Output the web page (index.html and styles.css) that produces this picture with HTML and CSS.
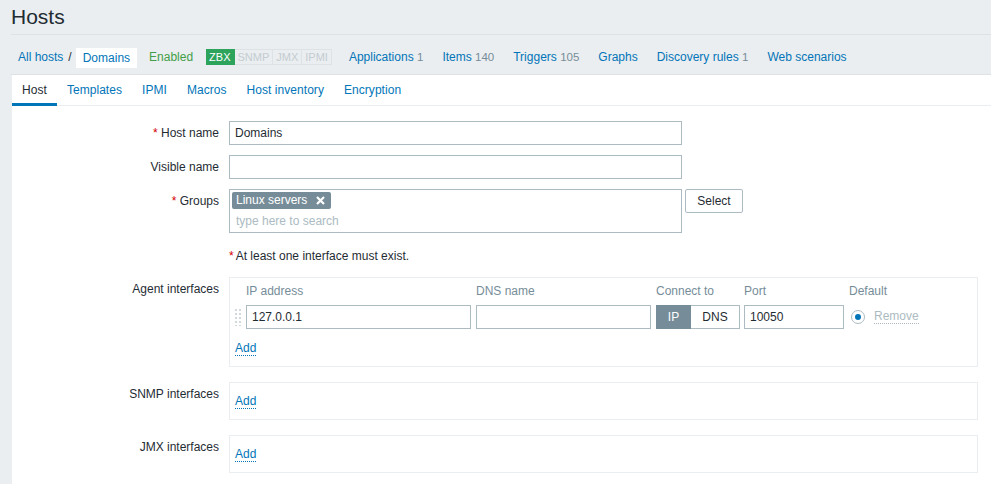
FILE: index.html
```html
<!DOCTYPE html>
<html>
<head>
<meta charset="utf-8">
<link rel="stylesheet" href="styles.css">
</head>
<body>
<header class="page-header"><h1>Hosts</h1></header>
<nav class="host-nav">
  <a class="nav-link" href="#">All hosts</a>
  <span class="sep">/</span>
  <span class="crumb-current">Domains</span>
  <span class="status-enabled">Enabled</span>
  <span class="avail">
    <span class="avail-item on">ZBX</span><span class="avail-item">SNMP</span><span class="avail-item">JMX</span><span class="avail-item">IPMI</span>
  </span>
  <a class="nav-link item first" href="#">Applications <span class="count">1</span></a>
  <a class="nav-link item" href="#">Items <span class="count">140</span></a>
  <a class="nav-link item" href="#">Triggers <span class="count">105</span></a>
  <a class="nav-link item" href="#">Graphs</a>
  <a class="nav-link item" href="#">Discovery rules <span class="count">1</span></a>
  <a class="nav-link item" href="#">Web scenarios</a>
</nav>
<main class="content">
  <div class="tabs">
    <span class="tab active">Host</span>
    <span class="tab">Templates</span>
    <span class="tab">IPMI</span>
    <span class="tab">Macros</span>
    <span class="tab">Host inventory</span>
    <span class="tab">Encryption</span>
  </div>
  <div class="form">
    <div class="row">
      <label class="label"><span class="req">*</span> Host name</label>
      <div class="field"><input class="text" value="Domains"></div>
    </div>
    <div class="row">
      <label class="label">Visible name</label>
      <div class="field"><input class="text" value=""></div>
    </div>
    <div class="row">
      <label class="label"><span class="req">*</span> Groups</label>
      <div class="field field-inline">
        <div class="multiselect">
          <span class="tag">Linux servers
            <svg class="tag-x" width="9" height="9" viewBox="0 0 9 9"><path d="M1 1L8 8M8 1L1 8" stroke="#fff" stroke-width="2.2" stroke-linecap="butt"/></svg>
          </span>
          <span class="placeholder">type here to search</span>
        </div>
        <button class="btn">Select</button>
      </div>
    </div>
    <div class="row">
      <div class="label"></div>
      <div class="field note"><span class="req">*</span> At least one interface must exist.</div>
    </div>
    <div class="row row-iface">
      <label class="label">Agent interfaces</label>
      <div class="iface-box agent">
        <div class="iface-head">
          <span class="c-handle"></span>
          <span class="c-ip">IP address</span>
          <span class="c-dns">DNS name</span>
          <span class="c-conn">Connect to</span>
          <span class="c-port">Port</span>
          <span class="c-def">Default</span>
        </div>
        <div class="iface-row">
          <span class="c-handle"><span class="handle"></span></span>
          <input class="text c-ip" value="127.0.0.1">
          <input class="text c-dns" value="">
          <span class="c-conn toggle"><span class="tg on">IP</span><span class="tg">DNS</span></span>
          <input class="text c-port" value="10050">
          <span class="c-def"><span class="radio"></span><span class="remove">Remove</span></span>
        </div>
        <a class="add" href="#">Add</a>
      </div>
    </div>
    <div class="row row-iface">
      <label class="label">SNMP interfaces</label>
      <div class="iface-box empty"><a class="add" href="#">Add</a></div>
    </div>
    <div class="row row-iface">
      <label class="label">JMX interfaces</label>
      <div class="iface-box empty"><a class="add" href="#">Add</a></div>
    </div>
  </div>
</main>
</body>
</html>
```
FILE: styles.css
```css
* { box-sizing: border-box; }
html, body { margin: 0; padding: 0; }
body {
  background: #ebeef0;
  font-family: "Liberation Sans", Arial, sans-serif;
  font-size: 12px;
  color: #1f2c33;
  overflow: hidden;
}
a { text-decoration: none; }

.page-header {
  margin-left: 11px;
  height: 35px;
  border-bottom: 1px solid #dde2e5;
}
.page-header h1 {
  margin: 0;
  padding-top: 5px;
  font-size: 21px;
  font-weight: normal;
  line-height: 24px;
  color: #1f2c33;
}

.host-nav {
  display: flex;
  align-items: center;
  margin-left: 11px;
  height: 40px;
  padding: 5px 0 0 7px;
  border-bottom: 1px solid #dde2e5;
  white-space: nowrap;
}
.nav-link { color: #0275b8; }
.sep { margin: 0 4px 0 5px; color: #1f2c33; }
.crumb-current {
  background: #fff;
  height: 20px;
  line-height: 20px;
  padding: 0 7px;
  color: #0275b8;
  margin-top: 1px;
}
.status-enabled { color: #429e47; margin-left: 12px; }
.avail {
  display: flex;
  margin-left: 13px;
  height: 16px;
}
.avail-item {
  display: inline-block;
  height: 16px;
  line-height: 14px;
  padding: 0 3px;
  font-size: 11px;
  color: #c3ccd1;
  border: 1px solid #dde2e5;
  border-left: none;
}
.avail-item.on {
  background: #2da35b;
  border-color: #2da35b;
  color: #fff;
}
.item { margin-left: 19px; }
.item.first { margin-left: 17px; }
.count { color: #768d99; font-size: 11.5px; }

.content {
  margin-left: 12px;
  background: #fff;
  height: 420px;
}
.tabs {
  display: flex;
  height: 31px;
  border-bottom: 1px solid #ebeef0;
}
.tab {
  position: relative;
  padding: 0 10px;
  line-height: 30px;
  color: #0275b8;
  letter-spacing: 0.05px;
}
.tab.active { color: #1f2c33; }
.tab.active::after {
  content: "";
  position: absolute;
  left: 0; right: 0; bottom: -1px;
  height: 3px;
  background: #0275b8;
}

.form { padding-top: 15px; }
.row {
  display: flex;
  align-items: flex-start;
  margin-bottom: 10px;
}
.label {
  width: 217px;
  flex: none;
  text-align: right;
  padding-right: 10px;
  line-height: 24px;
  color: #1f2c33;
}
.req { color: #d40000; }
.field { display: flex; }
.note { line-height: 24px; height: 24px; padding-top: 1px; }
.note .req { margin-right: 2px; }

input.text {
  font-family: inherit;
  font-size: 12px;
  color: #1f2c33;
  height: 24px;
  border: 1px solid #acbbc2;
  padding: 0 5px;
  margin: 0;
  outline: none;
  background: #fff;
}
.field > input.text { width: 453px; }

.multiselect {
  width: 453px;
  height: 44px;
  border: 1px solid #acbbc2;
  padding: 2px 0 0 2px;
}
.tag {
  display: inline-flex;
  align-items: center;
  height: 17px;
  padding: 0 6px 0 4px;
  background: #768d99;
  color: #fff;
  border-radius: 2px;
  line-height: 17px;
}
.tag-x { margin-left: 9px; }
.placeholder {
  display: block;
  color: #acbbc2;
  padding-left: 4px;
  margin-top: 5px;
  line-height: 14px;
}
.btn {
  margin-left: 3px;
  height: 24px;
  width: 58px;
  padding: 0;
  font-family: inherit;
  font-size: 12px;
  color: #1f2c33;
  background: #fff;
  border: 1px solid #acbbc2;
  border-radius: 2px;
}

.row-iface { margin-bottom: 15px; }
.iface-box {
  width: 749px;
  border: 1px solid #ebeef0;
}
.agent { height: 90px; padding-top: 6px; }
.iface-head, .iface-row { display: flex; align-items: center; }
.iface-head { height: 14px; line-height: 14px; color: #768d99; }
.iface-row { margin-top: 7px; height: 24px; }
.iface-box .c-handle { width: 16px; flex: none; display: flex; justify-content: flex-start; padding-left: 4px; }
.iface-box .c-ip { width: 225px; margin-right: 5px; flex: none; }
.iface-box .c-dns { width: 175px; margin-right: 5px; flex: none; }
.iface-box .c-conn { width: 84px; margin-right: 4px; flex: none; }
.iface-box .c-port { width: 100px; margin-right: 5px; flex: none; }
.iface-box .c-def { display: flex; align-items: center; }
.handle {
  width: 8px;
  height: 18px;
  background-image: radial-gradient(circle, #d3dadd 1.1px, transparent 1.2px);
  background-size: 4px 4px;
}
.toggle { display: flex; height: 24px; }
.tg {
  height: 24px;
  line-height: 22px;
  text-align: center;
  border: 1px solid #acbbc2;
}
.tg.on {
  width: 35px;
  background: #768d99;
  border-color: #768d99;
  color: #fff;
}
.tg + .tg { width: 49px; border-left: none; color: #1f2c33; }
.radio {
  width: 14px;
  height: 14px;
  border: 1px solid #acbbc2;
  border-radius: 50%;
  margin-left: 2px;
  position: relative;
}
.radio::after {
  content: "";
  position: absolute;
  left: 3px; top: 3px;
  width: 6px; height: 6px;
  border-radius: 50%;
  background: #0275b8;
}
.remove {
  margin-left: 9px;
  color: #acbbc2;
  border-bottom: 1px dotted #acbbc2;
  line-height: 13px;
}
.add {
  display: inline-block;
  color: #0275b8;
  border-bottom: 1px dotted #0275b8;
  line-height: 13px;
  margin-left: 5px;
}
.agent .add { margin-top: 13px; }
.empty { height: 38px; padding-top: 11px; }
```
